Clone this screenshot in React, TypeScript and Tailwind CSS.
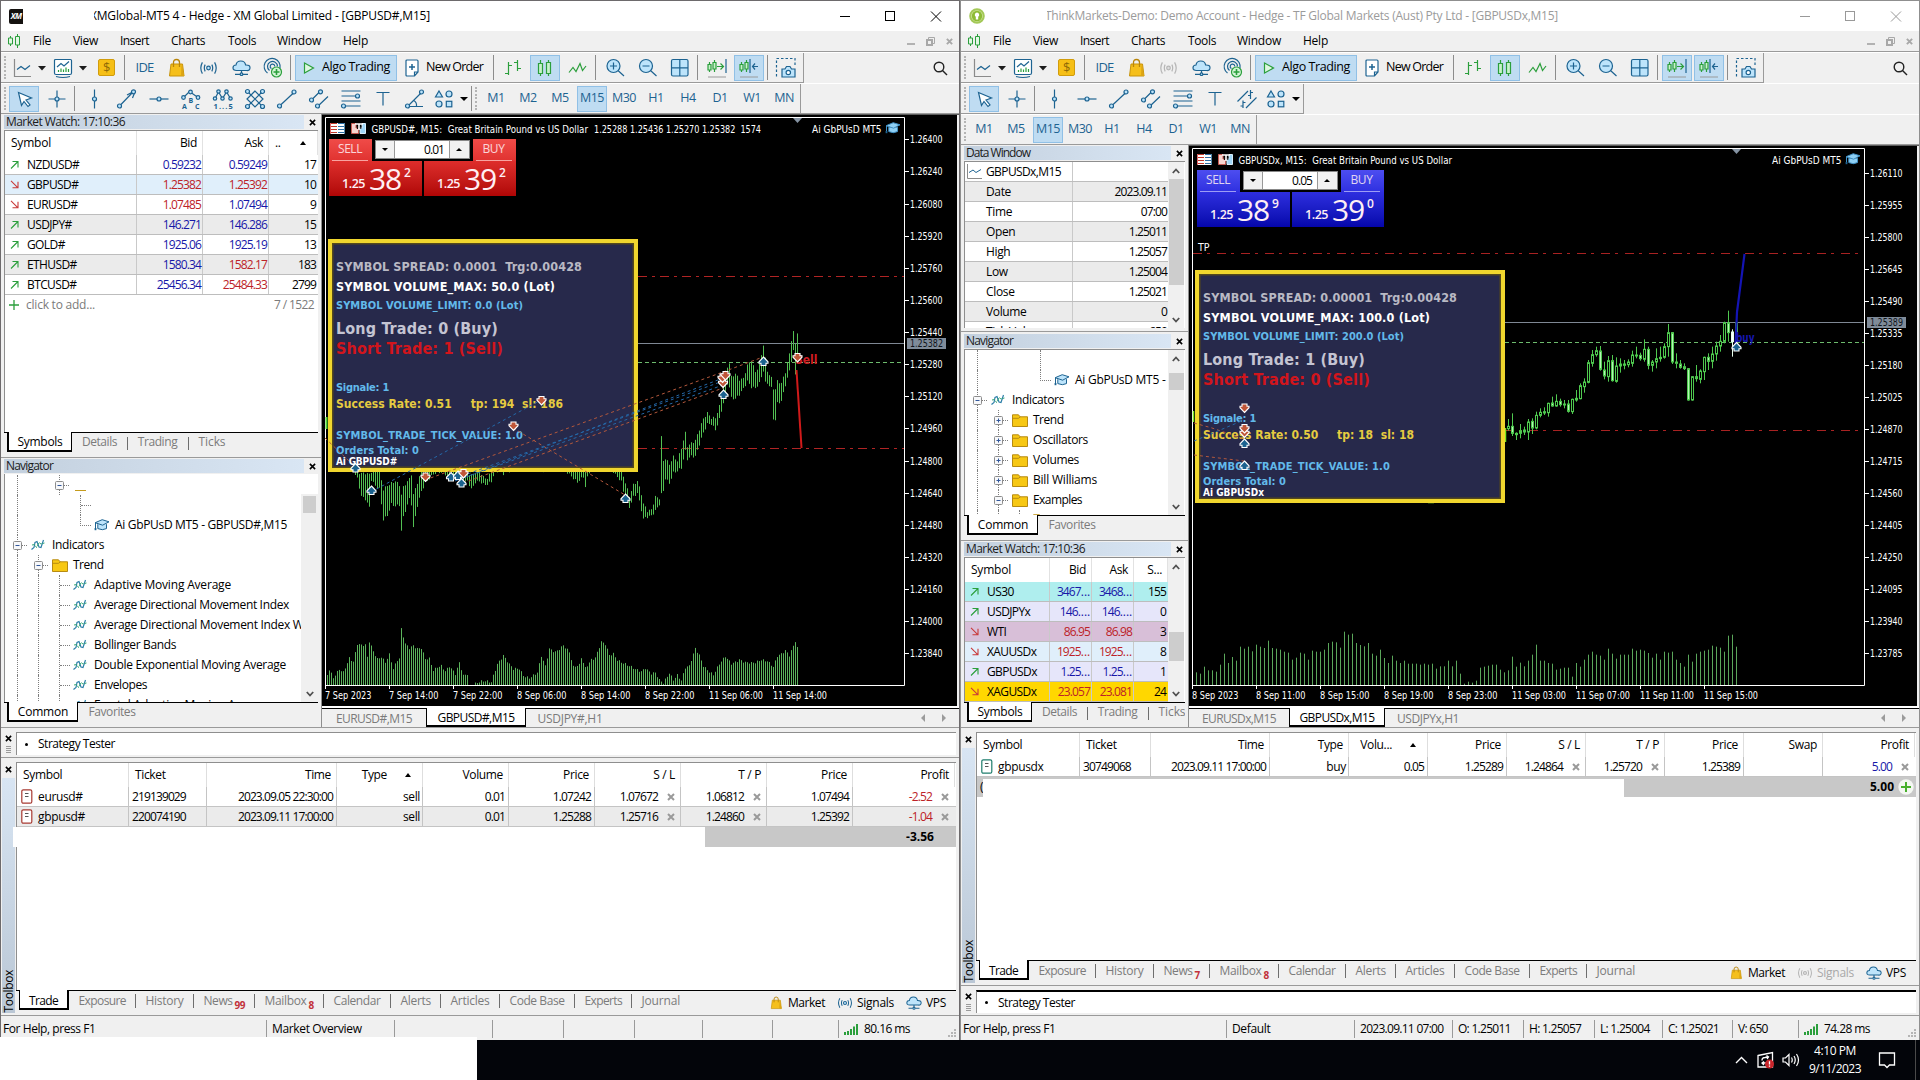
import { useLayoutEffect, useRef, type ReactNode } from "react";

/* ---------- text helpers ---------- */

// Spreads its letters so that the line takes exactly `w` pixels.
function Fit({ w, className = "", children }: { w: number; className?: string; children: string }) {
  const ref = useRef<HTMLSpanElement>(null);
  useLayoutEffect(() => {
    const el = ref.current;
    if (!el) return;
    el.style.letterSpacing = "0px";
    const natural = el.getBoundingClientRect().width;
    el.style.letterSpacing = `${(w - natural) / children.length}px`;
  }, [w, children]);
  return (
    <span className={`inline-block whitespace-pre ${className}`}>
      <span ref={ref}>{children}</span>
    </span>
  );
}

const NUM = "tracking-[-0.88px] pr-px";
const BLUE = "text-[#1717a8]";
const RED = "text-[#bc2228]";

/* ---------- small shared drawings ---------- */

const B = "#1d6391";
const G = "#2b9f3c";
const L = "#bde4fb";

function Cell({ w, on = false, children }: { w: string; on?: boolean; children?: ReactNode }) {
  return (
    <div className={`${w} flex h-[26px] shrink-0 items-center justify-center ${on ? "border border-[#90c0e6] bg-[#bfdcf2]" : ""}`}>
      {children}
    </div>
  );
}

function Sep() {
  return <div className="h-[25px] w-px shrink-0 bg-[#8c8c8c]" />;
}

function Grip({ w }: { w: string }) {
  return (
    <div className={`${w} flex h-[26px] shrink-0 flex-col items-center justify-between py-px`}>
      {[0, 1, 2, 3, 4, 5, 6].map((i) => (
        <div key={i} className="h-[2px] w-[2px] bg-[#b4b4b4]" />
      ))}
    </div>
  );
}

function Cross({ size = "h-[7px] w-[7px]", color = "#000", width = 1.8 }: { size?: string; color?: string; width?: number }) {
  return (
    <svg className={`${size} shrink-0`} viewBox="0 0 8 8" fill="none" stroke={color} strokeWidth={width}>
      <path d="M1 1L7 7M7 1L1 7" />
    </svg>
  );
}

function Bag({ size = "h-[20px] w-[18px]" }: { size?: string }) {
  return (
    <svg className={size} viewBox="0 0 18 20" fill="none">
      <path d="M3 6H14.5L16 18H1.5Z" fill="#f5bf1b" stroke="#c8930a" />
      <path d="M13.5 6L16.3 18H13Z" fill="#dca514" />
      <path d="M5.5 9V4.5Q5.5 1.5 8.5 1.5T11.5 4.5V9" stroke="#b98509" strokeWidth="1.3" />
    </svg>
  );
}

function Signal({ off = false, size = "h-[14px] w-[19px]" }: { off?: boolean; size?: string }) {
  const c = off ? "#b5b5b5" : B;
  return (
    <svg className={size} viewBox="0 0 19 14" fill="none" stroke={c} strokeWidth="1.2">
      <circle cx="9.5" cy="7" r="1.8" fill={off ? "#ddd" : L} />
      <path d="M6.2 3.6Q4.4 7 6.2 10.4M12.8 3.6Q14.6 7 12.8 10.4M3.4 1.4Q0.2 7 3.4 12.6M15.6 1.4Q18.8 7 15.6 12.6" />
    </svg>
  );
}

function Cloud({ size = "h-[16px] w-[19px]" }: { size?: string }) {
  return (
    <svg className={size} viewBox="0 0 19 16" fill="none" stroke={B} strokeWidth="1.2">
      <path d="M4.5 10.5Q1 10.5 1 7.8T4 5Q4.6 1 8.8 1T13.6 5Q18 4.8 18 7.8T14.6 10.5Z" fill={L} />
      <path d="M9.5 10.5V13M3 14.3H8M11 14.3H16" />
      <circle cx="9.5" cy="14.2" r="1.3" fill={L} />
    </svg>
  );
}

function Cap({ light = false }: { light?: boolean }) {
  return (
    <svg className="h-[12px] w-[16px] shrink-0" viewBox="0 0 16 12" fill="none" stroke={light ? "#3f8fc4" : B}>
      <path d="M3.8 5.2V9.6Q8.5 11.8 12.5 9.6V5.2" fill={light ? "#8fd0f5" : L} />
      <path d="M1.2 3.7L8.2 .7L15 2.8L8.6 6.2Z" fill={light ? "#8fd0f5" : L} />
      <path d="M1.5 4V10" />
      <rect x=".6" y="9" width="1.8" height="2.2" fill={B} stroke="none" />
    </svg>
  );
}

function Wave() {
  return (
    <svg className="h-[12px] w-[14px] shrink-0" viewBox="0 0 14 12" fill="none">
      <path d="M.5 10.5L3 8.5L4 3.5L6 2.5L8 8L10 8.5L12.5 1" stroke="#2c7fa8" strokeWidth="1.2" />
      <path d="M1 6L3.5 5.5L5.5 8.5L8 3.5L10 5L13.5 4" stroke="#39a878" strokeWidth="1" strokeDasharray="3 1" />
    </svg>
  );
}

function Folder() {
  return (
    <svg className="h-[13px] w-[16px] shrink-0" viewBox="0 0 16 13">
      <path d="M.5 12.5V.8H6.5L8 2.8H15.5V12.5Z" fill="#f7c814" stroke="#b78b12" />
      <path d="M.5 4.3H6.5L8.3 2.8" fill="none" stroke="#b78b12" />
    </svg>
  );
}

function Search() {
  return (
    <svg className="h-[15px] w-[15px]" viewBox="0 0 15 15" fill="none" stroke="#222" strokeWidth="1.4">
      <circle cx="6" cy="6" r="4.8" />
      <path d="M9.5 9.5L14 14" />
    </svg>
  );
}

function Up() {
  return <div className="h-0 w-0 border-x-[3.5px] border-b-[4px] border-x-transparent border-b-black" />;
}

/* ---------- toolbars ---------- */

function Tool({ children, w = 22 }: { children: ReactNode; w?: number }) {
  return (
    <svg width={w} height="22" viewBox={`0 0 ${w} 22`} fill="none" stroke={B} strokeWidth="1.2" className="shrink-0">
      {children}
    </svg>
  );
}

function Dot({ x, y, r = 2 }: { x: number; y: number; r?: number }) {
  return <circle cx={x} cy={y} r={r} fill={L} />;
}

function MainToolbar({ signalsOff, shiftOn }: { signalsOff: boolean; shiftOn: boolean }) {
  return (
    <div className="flex h-[31px] shrink-0 border-t border-white">
      <div className="flex h-[30px] w-[803px] items-center border-r border-b border-[#9a9a9a]">
        <Grip w="w-[8px]" />
        <Cell w="w-[40px]">
          <Tool w={36}>
            <path d="M3.5 2V19.500H20" stroke="#8a8a8a" />
            <path d="M6 12.500L10 9.500L14 12.500L19 8.500" />
            <path d="M27 9H35L31 13.500Z" fill="#1c1c1c" stroke="none" />
          </Tool>
        </Cell>
        <Cell w="w-[40px]">
          <Tool w={36}>
            <path d="M4.500 2.500H19.500Q20.500 2.500 20.500 3.500V16Q20.500 17.500 19 17.500H5Q3.500 17.500 3.500 16V3.500Q3.500 2.500 4.500 2.500Z" fill="#fff" />
            <path d="M5 19.500Q12 21.500 19 19.500" />
            <path d="M6 10L10 6.500L13 9L18 4.500" />
            <path d="M7.500 15V13M10 15V11.500M12.500 15V12.500M15 15V10.500M17.500 15V12" stroke={G} />
            <path d="M28 9H36L32 13.500Z" fill="#1c1c1c" stroke="none" />
          </Tool>
        </Cell>
        <Cell w="w-[35px]">
          <div className="flex h-[17px] w-[17px] items-center justify-center rounded-[2px] border border-[#d19c0c] bg-[#f6bf16] text-[13px] leading-none text-[#8f6a07]">$</div>
        </Cell>
        <Sep />
        <Cell w="w-[39px]">
          <span className="text-[13px] tracking-[-0.8px] text-[#1d6391]">IDE</span>
        </Cell>
        <Cell w="w-[26px]"><Bag /></Cell>
        <Cell w="w-[36px]"><Signal off={signalsOff} /></Cell>
        <Cell w="w-[30px]"><Cloud /></Cell>
        <Cell w="w-[34px]">
          <Tool>
            <path d="M5.500 16A8 8 0 1 1 18 11M7.500 13.500A5 5 0 1 1 15.500 9.500M9.500 11.500A2.300 2.300 0 1 1 12.800 9.500" />
            <circle cx="14.500" cy="15" r="5" fill="#d4f5d6" stroke={G} />
            <path d="M14.500 12V18M11.500 15H17.500" stroke={G} strokeWidth="1.600" />
          </Tool>
        </Cell>
        <Sep />
        <div className="ml-1 flex h-[26px] w-[102px] items-center border border-[#90c0e6] bg-[#bfdcf2] pl-[7px]">
          <svg className="h-[12px] w-[12px]" viewBox="0 0 12 12"><path d="M1.500 1L10.500 6L1.500 11Z" fill="#dff7e0" stroke={G} strokeWidth="1.200" /></svg>
          <Fit w={68} className="ml-[7px] text-[12.5px]">Algo Trading</Fit>
        </div>
        <div className="flex w-[96px] items-center pl-[8px]">
          <svg className="h-[18px] w-[14px]" viewBox="0 0 14 18" fill="none" stroke={B} strokeWidth="1.200">
            <path d="M2 1H12Q13 1 13 2V13L9.500 17H2Q1 17 1 16V2Q1 1 2 1ZM9.500 17V13H13" fill="#fff" />
            <path d="M7 5V11M4 8H10" strokeWidth="1.500" />
          </svg>
          <Fit w={57} className="ml-[7px] text-[12.5px]">New Order</Fit>
        </div>
        <Sep />
        <Cell w="w-[36px]">
          <Tool><path d="M7.500 5V18M4 16.500H7.500M7.500 8.500H11M16.500 3V14M13 5.500H16.500M16.500 11.500H20" stroke={G} /></Tool>
        </Cell>
        <Cell w="w-[30px]" on>
          <Tool>
            <path d="M6.500 3V19M14.500 3V19" stroke={G} />
            <path d="M4.500 6.500H8.500V16.500H4.500ZM12.500 5.500H16.500V16.500H12.500Z" fill="#c9f2cb" stroke={G} />
          </Tool>
        </Cell>
        <Cell w="w-[35px]">
          <Tool><path d="M2 15.500L6 10.500L9 14.500L13 6.500L15.500 13.500L19 9" stroke={G} /></Tool>
        </Cell>
        <Sep />
        <Cell w="w-[38px]">
          <Tool><circle cx="9.500" cy="9" r="6.500" fill={L} /><path d="M9.500 5.500V12.500M6 9H13M14 13.500L20 19" /></Tool>
        </Cell>
        <Cell w="w-[28px]">
          <Tool><circle cx="9" cy="9" r="6.500" fill={L} /><path d="M5.500 9H12.500M13.500 13.500L19.500 19" /></Tool>
        </Cell>
        <Cell w="w-[35px]">
          <Tool><rect x="2.500" y="2.500" width="16.500" height="16.500" rx="1.500" fill={L} /><path d="M10.800 2.500V19M2.500 10.800H19" /></Tool>
        </Cell>
        <Sep />
        <div className="ml-1 mr-[2px]">
          <Cell w="w-[30px]" on={shiftOn}>
            <Tool>
              <path d="M3.500 5V15M8.500 3V15" stroke={G} /><path d="M2 7.500H5V13H2ZM7 5.500H10V12H7Z" fill="#c9f2cb" stroke={G} />
              <path d="M11 9.500H17M14.500 6.500L17.500 9.500L14.500 12.500" stroke={G} />
              <path d="M20 2V16" /><path d="M2 20H20" stroke="#9a9a9a" strokeWidth="1" />
            </Tool>
          </Cell>
        </div>
        <Cell w="w-[30px]" on>
          <Tool>
            <path d="M3.500 5V15M8.500 3V15" stroke={G} /><path d="M2 7.500H5V13H2ZM7 5.500H10V12H7Z" fill="#c9f2cb" stroke={G} />
            <path d="M12 2V16M20 9.500H14.500M17 6.500L14.500 9.500L17 12.500" /><path d="M2 20H20" stroke="#9a9a9a" strokeWidth="1" />
          </Tool>
        </Cell>
        <div className="w-[3px]" />
        <Sep />
        <Cell w="w-[35px]">
          <Tool>
            <path d="M1.500 19.500V1.500H20V8" strokeDasharray="2.500 2" />
            <path d="M7 20V12H10L11.500 9.500H15L16.500 12H20V20Z" fill={L} />
            <circle cx="13.300" cy="15.500" r="2.200" fill="#fff" />
          </Tool>
        </Cell>
      </div>
      <div className="flex flex-1 items-center justify-end pr-[11px]"><Search /></div>
    </div>
  );
}

const glyphs: Record<string, ReactNode> = {
  vline: <><path d="M10.500 1.500V20.500" /><Dot x={10.500} y={11} /></>,
  hline: <><path d="M1.500 11H20.500" /><Dot x={11} y={11} /></>,
  arrow: <><path d="M4 17.500L17 4M11 7L17.500 3.500M16.500 10L18.500 5" /><Dot x={3.500} y={18} /><Dot x={17.500} y={3.800} /></>,
  abc: <><path d="M3.500 9.500L9.500 3.500L18 9.500" /><Dot x={3.500} y={9.500} r={1.800} /><Dot x={10.500} y={4} r={1.800} /><Dot x={18} y={9.500} r={1.800} />
    <text x="2" y="20.500" fontSize="7" fontWeight="700" fill={B} stroke="none">A</text><text x="8.500" y="14.500" fontSize="7" fontWeight="700" fill={B} stroke="none">B</text><text x="15" y="20.500" fontSize="7" fontWeight="700" fill={B} stroke="none">C</text></>,
  waves: <><path d="M3 10.500L6.500 4L10.500 10.500L14.500 4L18.500 10.500" /><Dot x={3} y={10.500} r={1.700} /><Dot x={6.500} y={3.500} r={1.700} /><Dot x={10.500} y={10.500} r={1.700} /><Dot x={14.500} y={3.500} r={1.700} /><Dot x={18.500} y={10.500} r={1.700} />
    <text x="1.500" y="20.500" fontSize="7.500" fontWeight="700" fill={B} stroke="none" textLength="19">1...5</text></>,
  gann: <><path d="M3.500 3.500L18.500 18.500M18.500 3.500L3.500 18.500M11 3L3 11L11 19L19 11Z" /><Dot x={3.500} y={3.500} /><Dot x={18.500} y={3.500} /><Dot x={3.500} y={18.500} /><Dot x={18.500} y={18.500} /></>,
  trend: <><path d="M3.500 18L18.500 4" /><Dot x={3.500} y={18} /><Dot x={18} y={4} /></>,
  channel: <><path d="M3.500 12L12 3.500M9.500 18.500L20 8.500" /><Dot x={3.500} y={12} /><Dot x={12.500} y={3.800} /><Dot x={9.500} y={18} /></>,
  fibo: <><path d="M1.500 3H20.500M1.500 8H16M1.500 13H20.500M5 18H20.500" /><Dot x={17.500} y={8} /><Dot x={3.500} y={18} /></>,
  text: <path d="M4.500 4.500H17.500M11 4.500V17.500" />,
  angle: <><path d="M3.500 18.500H19M3.500 18.500L17.500 4.500M9.500 12.500Q13 14 12.500 18.500" /><Dot x={3.500} y={18} /><Dot x={17.500} y={4} /></>,
  shapes: <><path d="M5 3L8.500 9H1.500Z" fill={L} /><circle cx="15" cy="6" r="3" fill={L} /><circle cx="5" cy="16" r="3" fill={L} /><rect x="12.300" y="13.300" width="5.500" height="5.500" fill={L} /></>,
  fork: <><path d="M1.500 13.500L12 3M10 20L20.500 9.500M7 12.500V20M4.500 18H7M7 14.500H9.500M14.500 2V11M12 7.500H14.500M14.500 4.500H17" /></>,
};

function ToolRow({ tools }: { tools: string[] }) {
  return (
    <>
      <Grip w="w-[8px]" />
      <Cell w="w-[30px]" on>
        <Tool><path d="M5.500 4.500L18.500 10L13 12L17 17L15 18.500L11 13.500L8.500 17.500Z" fill="#fff" /></Tool>
      </Cell>
      <Cell w="w-[35px]">
        <Tool><path d="M11 2.500V19.500M2.500 11H19.500" /><Dot x={11} y={11} /></Tool>
      </Cell>
      <Sep />
      <div className="w-1 shrink-0" />
      {tools.map((t) => (
        <Cell key={t} w="w-8"><Tool>{glyphs[t]}</Tool></Cell>
      ))}
      <div className="flex w-[40px] shrink-0 items-center gap-[4px] pl-[3px]">
        <Tool>{glyphs.shapes}</Tool>
        <div className="h-0 w-0 border-x-[4px] border-t-[4.5px] border-x-transparent border-t-black" />
      </div>
    </>
  );
}

function Frames({ items }: { items: string[] }) {
  return (
    <>
      {items.map((t) => (
        <Cell key={t} w="w-8">
          <div className={`flex h-[26px] w-[30px] items-center justify-center text-[12.5px] tracking-[-0.5px] text-[#1d6391] ${t === "M15" ? "border border-[#90c0e6] bg-[#bfdcf2]" : ""}`}>{t}</div>
        </Cell>
      ))}
    </>
  );
}

/* ---------- window frame ---------- */

const MENU: [string, string, number][] = [
  ["File", "w-[40px]", 18], ["View", "w-[47px]", 25], ["Insert", "w-[51px]", 29], ["Charts", "w-[57px]", 34],
  ["Tools", "w-[49px]", 28], ["Window", "w-[66px]", 44], ["Help", "w-[40px]", 25],
];

function TitleBar({ logo, title, active }: { logo: ReactNode; title: ReactNode; active: boolean }) {
  const c = active ? "#000" : "#999";
  return (
    <div className={`flex h-[30px] shrink-0 items-center bg-white pl-[8px] ${active ? "text-black" : "text-[#9b9b9b]"}`}>
      {logo}
      {title}
      <svg className="mr-[17px] ml-auto h-[12px] w-[104px]" viewBox="0 0 104 12" fill="none" stroke={c} strokeWidth="1">
        <path d="M2 6.500H12M93 1.500L103 11.500M103 1.500L93 11.500" />
        <rect x="47.500" y="1.500" width="9" height="9" />
      </svg>
    </div>
  );
}

function MenuBar() {
  return (
    <div className="flex h-[20px] shrink-0 items-center pl-[6px]">
      <svg className="mr-[12px] h-[14px] w-[14px]" viewBox="0 0 14 14" fill="#e3f7e5" stroke={G}>
        <path d="M3.500 2V12M10.500 0V14" /><path d="M1.500 4H5.500V10H1.500ZM8.500 2.500H12.500V11H8.500Z" />
      </svg>
      {MENU.map(([m, w, fw]) => (
        <div key={m} className={w}><Fit w={fw}>{m}</Fit></div>
      ))}
      <div className="mr-[6px] ml-auto flex items-center gap-[11px]">
        <div className="mt-[5px] h-[2px] w-[8px] bg-[#b2b2b2]" />
        <svg className="h-[9px] w-[9px]" viewBox="0 0 9 9" fill="none" stroke="#a8a8a8"><path d="M2.500 2V.5H8.500V6.500H7" /><rect x="1" y="3" width="5" height="5" strokeWidth="2" /></svg>
        <Cross color="#a8a8a8" width={2.2} />
      </div>
    </div>
  );
}

/* ---------- docked panels ---------- */

function DockHead({ title, w, bar }: { title: string; w: number; bar: string }) {
  return (
    <div className="flex h-[16px] shrink-0 items-center">
      <div className={`${bar} flex h-[14px] items-center bg-linear-to-r from-[#c3d0de] to-[#d9e6f4] pl-[2px] text-[#1b1b1b]`}>
        <Fit w={w}>{title}</Fit>
      </div>
      <div className="flex flex-1 items-center justify-center pt-px"><Cross /></div>
    </div>
  );
}

function DockTabs({ tabs }: { tabs: [string, string, number][] }) {
  return (
    <div className="flex h-[25px] shrink-0 items-start overflow-hidden">
      <div className="h-px w-[3px] shrink-0 bg-black" />
      {tabs.map(([t, w, fw], i) => (
        <div
          key={t}
          className={`${w} flex shrink-0 items-center justify-center ${i === 0 ? "h-[20px] border-x border-b border-black border-l-[2px] border-b-[2px] bg-white pt-[2px]" : "h-[18px] border-t border-t-black text-[#7b7b7b]"} ${i > 1 ? "relative before:absolute before:top-[4px] before:left-0 before:h-[13px] before:w-px before:bg-[#6e6e6e]" : ""}`}
        >
          <Fit w={fw}>{t}</Fit>
        </div>
      ))}
      <div className="h-px flex-1 bg-black" />
    </div>
  );
}

function Scroll({ h, top, thumb }: { h: string; top: string; thumb: string }) {
  return (
    <div className={`${h} flex w-[16px] shrink-0 flex-col items-center bg-[#f0f0f0]`}>
      <svg className="mt-[6px] h-[6px] w-[8px] shrink-0" viewBox="0 0 8 6" fill="none" stroke="#505050" strokeWidth="1.800"><path d="M.8 5L4 1.500L7.200 5" /></svg>
      <div className={top} />
      <div className={`${thumb} w-[15px] shrink-0 bg-[#cdcdcd]`} />
      <svg className="mt-auto mb-[5px] h-[6px] w-[8px] shrink-0" viewBox="0 0 8 6" fill="none" stroke="#505050" strokeWidth="1.800"><path d="M.8 1L4 4.500L7.200 1" /></svg>
    </div>
  );
}

type Quote = { s: string; up: boolean; bid: string; ask: string; sp: string; bb: boolean; ab: boolean; bg: string };

function Price({ v }: { v: string }) {
  const cut = v.indexOf("..");
  if (cut < 0) return <>{v}</>;
  return (
    <>
      {v.slice(0, cut)}
      <span className="tracking-[-0.1px]">{v.slice(cut)}</span>
    </>
  );
}

function QuoteRow({ q, cols }: { q: Quote; cols: string[] }) {
  return (
    <div className={`flex h-[20px] shrink-0 items-center border-b border-[#bdbdbd] ${q.bg}`}>
      <div className={`${cols[0]} flex h-full items-center border-r border-[#c9c9c9] pl-[5px]`}>
        <svg className="mr-[8px] h-[9px] w-[9px]" viewBox="0 0 9 9" fill="none" stroke={q.up ? G : "#c83a3a"} strokeWidth="1.100">
          {q.up ? <path d="M1 8.500L8 1.500M2.500 1.500H8V7.500" /> : <path d="M1 .8L8 7.800M2.500 7.800H8V1.800" />}
        </svg>
        <span className="tracking-[-0.6px]">{q.s}</span>
      </div>
      <div className={`${cols[1]} flex h-full items-center justify-end border-r border-[#c9c9c9] pr-[3px] ${NUM} ${q.bb ? BLUE : RED}`}><Price v={q.bid} /></div>
      <div className={`${cols[2]} flex h-full items-center justify-end border-r border-[#c9c9c9] pr-[3px] ${NUM} ${q.ab ? BLUE : RED}`}><Price v={q.ask} /></div>
      <div className={`${cols[3]} flex h-full items-center justify-end pr-[4px] ${NUM}`}>{q.sp}</div>
    </div>
  );
}

const leftQuotes: Quote[] = [
  { s: "NZDUSD#", up: true, bid: "0.59232", ask: "0.59249", sp: "17", bb: true, ab: true, bg: "bg-white" },
  { s: "GBPUSD#", up: false, bid: "1.25382", ask: "1.25392", sp: "10", bb: false, ab: false, bg: "bg-[#e0effb]" },
  { s: "EURUSD#", up: false, bid: "1.07485", ask: "1.07494", sp: "9", bb: false, ab: true, bg: "bg-white" },
  { s: "USDJPY#", up: true, bid: "146.271", ask: "146.286", sp: "15", bb: true, ab: true, bg: "bg-[#ebebeb]" },
  { s: "GOLD#", up: true, bid: "1925.06", ask: "1925.19", sp: "13", bb: true, ab: true, bg: "bg-white" },
  { s: "ETHUSD#", up: true, bid: "1580.34", ask: "1582.17", sp: "183", bb: true, ab: false, bg: "bg-[#ebebeb]" },
  { s: "BTCUSD#", up: true, bid: "25456.34", ask: "25484.33", sp: "2799", bb: true, ab: false, bg: "bg-white" },
];

const rightQuotes: Quote[] = [
  { s: "US30", up: true, bid: "3467...", ask: "3468...", sp: "155", bb: true, ab: true, bg: "bg-[#afeeee]" },
  { s: "USDJPYx", up: true, bid: "146....", ask: "146....", sp: "0", bb: true, ab: true, bg: "bg-[#e6e6fa]" },
  { s: "WTI", up: false, bid: "86.95", ask: "86.98", sp: "3", bb: false, ab: false, bg: "bg-[#d8bfd8]" },
  { s: "XAUUSDx", up: false, bid: "1925...", ask: "1925...", sp: "8", bb: false, ab: false, bg: "bg-[#e0effb]" },
  { s: "GBPUSDx", up: true, bid: "1.25...", ask: "1.25...", sp: "1", bb: true, ab: true, bg: "bg-[#e6e6fa]" },
  { s: "XAGUSDx", up: false, bid: "23.057", ask: "23.081", sp: "24", bb: false, ab: false, bg: "bg-[#ffd700]" },
];

/* ---------- navigator tree ---------- */

// Guides: "|" line, " " gap, "-" open box, "+" closed box, "t" branch, "l" last branch.
function Guide({ k }: { k: string }) {
  const d = "border-dotted border-[#7d7d7d]";
  return (
    <div className="flex h-[20px] w-[21px] shrink-0">
      <div className={`w-[10px] ${k === "-" || k === "+" ? "flex items-center justify-end" : ""}`} />
      {k === "|" && <div className={`w-0 border-l ${d}`} />}
      {k === "t" && <div className={`flex w-[11px] items-center border-l ${d}`}><div className={`w-full border-t ${d}`} /></div>}
      {k === "l" && <div className={`h-[11px] w-[11px] border-b border-l ${d}`} />}
      {(k === "-" || k === "+") && (
        <div className="-ml-[4px] flex items-center">
          <svg className="h-[20px] w-[15px]" viewBox="0 0 15 20" fill="none">
            <path d="M4.500 0V5M4.500 15V20M9 10.500H15" stroke="#7d7d7d" strokeDasharray="1 1" />
            <rect x=".5" y="6.500" width="8" height="8" rx="1" fill="#f7f8fa" stroke="#8c8c8c" />
            <path d={k === "+" ? "M2.500 10.500H6.500M4.500 8.500V12.500" : "M2.500 10.500H6.500"} stroke="#31579b" />
          </svg>
        </div>
      )}
    </div>
  );
}

function Node({ g, icon, text, w }: { g: string; icon?: ReactNode; text?: string; w?: number }) {
  return (
    <div className="flex h-[20px] shrink-0 items-center pl-[2px]">
      {g.split("").map((k, i) => <Guide key={i} k={k} />)}
      <div className="flex w-[24px] shrink-0 items-center pl-[3px]">{icon}</div>
      {text && (w ? <Fit w={w}>{text}</Fit> : <span className="whitespace-nowrap">{text}</span>)}
    </div>
  );
}

/* ---------- charts ---------- */

function Tx({ x, y, w, fill = "#fff", size = 10, bold = false, children }: { x: number; y: number; w: number; fill?: string; size?: number; bold?: boolean; children: string }) {
  return (
    <text x={x} y={y} textLength={w} lengthAdjust="spacingAndGlyphs" fill={fill} fontSize={size} fontWeight={bold ? 700 : 400} xmlSpace="preserve">
      {children}
    </text>
  );
}

function Mark({ x, y, up }: { x: number; y: number; up: boolean }) {
  return (
    <path
      d={up ? "M0 -4.500L4.500 0.300V1.800H2.500V4H-2.500V1.800H-4.500V0.300Z" : "M0 4.500L4.500 -0.300V-1.800H2.500V-4H-2.500V-1.800H-4.500V-0.300Z"}
      transform={`translate(${x} ${y})`}
      fill={up ? "#1b628f" : "#bf5638"}
      stroke="#fff"
      strokeWidth="1.100"
    />
  );
}

function Flags({ x, y }: { x: number; y: number }) {
  return (
    <g transform={`translate(${x} ${y})`}>
      <rect width="15" height="11" fill="#fff" />
      <path d="M0 .5H7M0 3.500H7M0 6.500H7M0 9.500H7" stroke="#c0392b" strokeWidth="1.200" />
      <path d="M8 .5H15M8 3.500H15M8 6.500H15M8 9.500H15" stroke="#2c6fa5" strokeWidth="1.200" />
      <path d="M.5 0V11" stroke="#d66" /><path d="M14.500 0V11" stroke="#58a" />
      <path d="M21.500 .5H26V5H28.500V10.500H21.500Z" fill="#f6d5d0" stroke="#c65a52" />
      <path d="M35.500 .5H32V5H30V10.500H35.500Z" fill="#9fd6f7" stroke="#d9eefb" />
      <path d="M25 1H33M29 1V7" stroke="#fff" strokeWidth="1.600" />
      <path d="M27.500 3V6M30.800 3V6" stroke="#101010" />
    </g>
  );
}

function lerpTable(points: number[][], x: number, k: number) {
  for (let i = 1; i < points.length; i++) {
    const a = points[i - 1];
    const b = points[i];
    if (x <= b[0]) return a[k] + ((b[k] - a[k]) * (x - a[0])) / (b[0] - a[0] || 1);
  }
  return points[points.length - 1][k];
}

const leftVol = [
  [327, 10], [329, 15], [333, 6], [339, 15], [343, 13], [349, 28], [353, 24], [357, 41], [361, 39], [365, 39], [367, 27], [369, 43], [373, 34], [377, 27], [381, 29], [385, 23], [389, 30], [393, 15], [397, 24], [399, 26], [401, 56], [405, 42], [409, 38], [413, 40], [417, 36], [421, 36], [425, 25], [429, 26], [433, 15], [437, 19], [441, 20], [445, 14], [449, 18], [455, 10], [459, 22], [463, 10], [467, 12], [469, 0], [477, 2], [483, 3], [491, 3], [493, 10], [497, 22], [503, 30], [509, 20], [513, 15], [519, 16], [523, 10], [529, 8], [537, 12], [541, 28], [545, 18], [549, 36], [555, 34], [563, 40], [569, 32], [573, 17], [579, 20], [581, 28], [585, 18], [591, 26], [595, 27], [601, 42], [605, 40], [609, 30], [613, 32], [617, 26], [623, 22], [629, 18], [635, 15], [641, 14], [645, 18], [651, 12], [655, 12], [659, 4], [663, 1], [669, 12], [673, 6], [677, 11], [681, 5], [685, 17], [689, 18], [695, 36], [699, 30], [703, 20], [709, 14], [713, 10], [719, 20], [725, 28], [731, 22], [739, 26], [745, 22], [751, 21], [755, 22], [761, 26], [767, 25], [773, 18], [777, 28], [781, 30], [785, 34], [789, 30], [793, 40], [795, 45], [797, 38],
];

const leftBars = [
  [355, 472, 475], [357, 472, 478], [361, 472, 495], [365, 472, 498], [369, 474, 507], [371, 472, 480], [375, 472, 487], [379, 472, 490], [383, 490, 520], [387, 485, 515], [391, 482, 503], [395, 480, 505], [399, 485, 505], [401, 495, 531], [403, 488, 518], [409, 480, 500], [411, 475, 505], [413, 495, 528], [417, 482, 505], [421, 470, 490], [425, 470, 482], [433, 470, 475], [441, 470, 473], [457, 470, 478], [463, 475, 485], [467, 475, 482], [471, 476, 490], [475, 472, 482], [479, 470, 480], [483, 476, 483], [487, 478, 484], [491, 472, 482], [495, 468, 472], [503, 468, 474], [507, 466, 470], [565, 466, 470], [571, 470, 475], [577, 470, 482], [583, 470, 478], [585, 470, 488], [588, 468, 474], [595, 460, 468], [611, 466, 470], [615, 468, 476], [621, 470, 482], [625, 482, 500], [629, 495, 506], [633, 484, 496], [637, 481, 493], [641, 495, 511], [643, 505, 520], [647, 512, 518], [651, 510, 516], [655, 496, 510], [659, 497, 503], [661, 436, 493], [663, 460, 490], [665, 458, 478], [669, 465, 484], [673, 458, 474], [677, 462, 472], [681, 448, 468], [685, 432, 450], [687, 445, 458], [691, 442, 455], [695, 440, 456], [699, 430, 445], [703, 420, 434], [707, 414, 425], [711, 418, 424], [715, 417, 429], [719, 405, 418], [723, 378, 402], [727, 367, 384], [729, 364, 388], [731, 378, 399], [735, 375, 400], [739, 380, 395], [743, 378, 388], [747, 364, 380], [751, 359, 386], [755, 372, 388], [759, 366, 384], [763, 346, 372], [765, 360, 384], [767, 372, 384], [771, 378, 388], [773, 388, 418], [775, 388, 419], [777, 380, 402], [781, 382, 400], [785, 372, 385], [789, 355, 372], [791, 341, 362], [793, 333, 352], [795, 345, 376], [797, 333, 362],
];

const jitter = (i: number) => Math.sin(i * 12.9898) * 0.5 + Math.sin(i * 4.1) * 0.5;

function Axis({ first, step, y0, dy, n, x }: { first: number; step: number; y0: number; dy: number; n: number; x: number }) {
  return (
    <>
      {Array.from({ length: n }, (_, i) => (
        <g key={i}>
          <path d={`M${x} ${Math.round(y0 + i * dy) + 0.5}h4`} stroke="#fff" />
          <Tx x={x + 5} y={y0 + i * dy + 4} w={32.500}>{((first - step * i) / 100000).toFixed(5)}</Tx>
        </g>
      ))}
    </>
  );
}

function LeftChart() {
  const times = ["7 Sep 2023", "7 Sep 14:00", "7 Sep 22:00", "8 Sep 06:00", "8 Sep 14:00", "8 Sep 22:00", "11 Sep 06:00", "11 Sep 14:00"];
  const bars = Array.from({ length: 236 }, (_, i) => 327 + i * 2);
  return (
    <svg className="block h-[591px] w-[635px] font-['DejaVu_Sans_Condensed','DejaVu_Sans',sans-serif] tracking-normal" viewBox="322 115 635 591">
      <rect x="322" y="115" width="635" height="591" fill="#000" />
      <path d="M325.500 686V117.500H904.500V685.500H325.500" fill="none" stroke="#fff" />
      <path d="M793 118H802L797.500 123Z" fill="#8593a3" />
      <Flags x={330} y={123} />
      <Tx x={371.500} y={132.500} w={216.500}>GBPUSD#, M15:  Great Britain Pound vs US Dollar</Tx>
      <Tx x={594} y={132.500} w={167}>{"1.25288 1.25436 1.25270 1.25382\u00a0\u00a01574"}</Tx>
      <Tx x={812} y={132.500} w={69.500}>Ai GbPUsD MT5</Tx>
      <Axis first={126400} step={160} y0={139.300} dy={32.120} n={17} x={905} />
      {bars.map((x, i) => {
        const h = Math.max(0, lerpTable(leftVol, x, 1) + jitter(i) * 2.200);
        return <path key={x} d={`M${x + 0.5} 685V${685 - h}`} stroke="#5bb35b" />;
      })}
      {times.map((t, i) => (
        <g key={t}>
          <path d={`M${325.500 + i * 64} 685V689`} stroke="#fff" />
          <Tx x={325 + i * 64} y={698.500} w={t.length === 10 ? 46.500 : t.length === 11 ? 49.500 : 54}>{t}</Tx>
        </g>
      ))}
      <path d="M326.500 417V429" stroke="#4fd42f" strokeWidth="2" />
      <path d="M638 343.500H904" stroke="#7f8894" />
      <path d="M638 362.500H904" stroke="#6dbb6d" strokeDasharray="4 3" />
      <path d="M638 276.500H904M638 448.500H904" stroke="#b02424" strokeDasharray="9 5 3 5" />
      {bars.filter((x) => x >= 355).map((x, i) => {
        const j = jitter(i) * 2.500;
        return <path key={x} d={`M${x + 0.5} ${lerpTable(leftBars, x, 1) + j}V${lerpTable(leftBars, x, 2) + j}`} stroke="#52c052" />;
      })}
      <path d="M796.500 370L801.500 448" stroke="#d01a1a" strokeWidth="2" />
      <rect x="907" y="338" width="39" height="11" fill="#7f8b99" />
      <Tx x={910} y={347.300} w={33} fill="#10151c">1.25382</Tx>
    </svg>
  );
}

function LeftMarks() {
  return (
    <svg className="pointer-events-none absolute inset-0 h-[591px] w-[635px] font-['DejaVu_Sans',sans-serif] tracking-normal" viewBox="322 115 635 591" fill="none">
      <g strokeDasharray="3 3">
        <path d="M425 480L723 372M723 372L763 357M463 483L723 388M513 428L625 495M325 438L350 462" stroke="#b3583c" />
        <path d="M371 492L541 400M451 480L723 381M455 481L723 385M458 480L723 378" stroke="#2468a8" />
      </g>
      {[[355.500, 468], [371.500, 490.500], [451, 477], [458, 475.500], [461.500, 483], [625.500, 498.500], [723.500, 394.500], [763.500, 361.500]].map(([x, y]) => <Mark key={`${x}${y}`} x={x} y={y} up />)}
      {[[425.500, 477], [463.500, 473.500], [541.500, 400.500], [513.500, 426], [723, 383], [722.500, 378], [725.500, 375.500]].map(([x, y]) => <Mark key={`${x}${y}`} x={x} y={y} up={false} />)}
      <Tx x={795} y={363.500} w={22.500} size={12} bold fill="#cf1c22">Sell</Tx>
      <Mark x={797.500} y={357.500} up={false} />
    </svg>
  );
}

const rightVolA = [1118, 1122, 1101, 1112, 1112, 1116, 1095, 1062, 1090, 1072, 1083, 1041, 1047, 1041, 1055, 1035, 1041, 1045, 1023, 1045, 1047, 1050, 1056, 1059, 1080, 1074, 1059, 1062, 1080, 1053, 1056, 1056, 1050, 1030, 1026, 1028, 1044, 996, 1005, 1002, 1030, 1036, 1040, 1030, 1062, 1068, 1050, 1075, 1090, 1068, 1083, 1090, 1083, 1092, 1092, 1092, 1095, 1092, 1095, 1092, 1107, 1100, 1100, 1083, 1100, 1083, 1122, 1152, 1146, 1149, 1143, 1104, 1101, 1098, 1095, 1095, 1110, 1118, 1112, 1071, 1101, 1089, 1100, 1083, 1065, 1035, 1083, 1083, 1090, 1092, 1110, 1107, 1104, 1104, 1131, 1090, 1101, 1080, 1065, 1056, 1065, 1068, 1080, 1047, 1062, 1077, 1065, 1065, 1065, 1047, 1053, 1050, 1053, 1060, 1074, 1062, 1080, 1056, 1059, 1056, 1080, 1090, 1101, 1065, 1086, 1062, 1056, 1053, 1050, 1038, 1041, 1044, 1056, 1008, 1005, 1041];

// High, body top, body bottom, low and fill flag, in thirds of a pixel below y = 300.
const candles = [
  [357, 379, 386, 392, 0], [340, 379, 400, 408, 1], [397, 400, 404, 420, 0], [372, 392, 400, 415, 0], [380, 390, 396, 405, 0], [357, 366, 396, 420, 0], [355, 364, 384, 402, 1], [335, 346, 384, 388, 0], [325, 337, 346, 352, 0], [322, 335, 339, 345, 0], [308, 310, 338, 350, 0], [290, 309, 318, 320, 1], [283, 304, 318, 320, 0], [296, 304, 314, 320, 1], [300, 312, 314, 325, 0], [300, 312, 334, 338, 1], [296, 298, 335, 342, 0], [270, 295, 300, 305, 0], [250, 257, 296, 298, 0], [235, 246, 260, 278, 0], [180, 188, 247, 250, 0], [150, 164, 190, 200, 0], [140, 152, 164, 170, 0], [138, 153, 208, 212, 1], [185, 210, 228, 238, 1], [168, 182, 230, 245, 0], [165, 182, 242, 245, 1], [172, 198, 244, 248, 0], [175, 192, 198, 218, 0], [180, 192, 196, 208, 0], [178, 186, 194, 202, 0], [152, 165, 190, 200, 0], [140, 165, 168, 175, 0], [158, 166, 176, 182, 1], [118, 148, 178, 185, 0], [140, 148, 196, 208, 1], [180, 186, 196, 215, 0], [145, 176, 186, 205, 0], [140, 172, 176, 185, 0], [130, 140, 172, 176, 0], [72, 98, 140, 170, 0], [97, 98, 186, 192, 1], [160, 186, 190, 205, 0], [180, 192, 202, 206, 1], [190, 200, 206, 210, 0], [205, 206, 300, 302, 1], [228, 230, 300, 302, 0], [195, 230, 236, 245, 1], [208, 213, 238, 250, 0], [170, 172, 215, 240, 0], [160, 172, 184, 210, 1], [140, 162, 184, 205, 0], [125, 138, 162, 182, 0], [105, 124, 138, 155, 0], [65, 68, 124, 130, 0], [32, 68, 98, 125, 1], [88, 96, 125, 170, 2], [32, 68, 125, 126, 0],
];

function RightChart() {
  const times = ["8 Sep 2023", "8 Sep 11:00", "8 Sep 15:00", "8 Sep 19:00", "8 Sep 23:00", "11 Sep 03:00", "11 Sep 07:00", "11 Sep 11:00", "11 Sep 15:00"];
  return (
    <svg className="block h-[560px] w-[728px] font-['DejaVu_Sans_Condensed','DejaVu_Sans',sans-serif] tracking-normal" viewBox="1189 146 728 560">
      <rect x="1189" y="146" width="728" height="560" fill="#000" />
      <path d="M1192.500 686V148.500H1864.500V685.500H1192.500" fill="none" stroke="#fff" />
      <path d="M1732 149H1741L1736.500 154Z" fill="#8593a3" />
      <Flags x={1197} y={154} />
      <Tx x={1238.500} y={163.500} w={213.500}>GBPUSDx, M15:  Great Britain Pound vs US Dollar</Tx>
      <Tx x={1772} y={163.500} w={69.500}>Ai GbPUsD MT5</Tx>
      <Axis first={126110} step={155} y0={173.300} dy={32} n={16} x={1865} />
      {rightVolA.map((v, i) => (
        <path key={i} d={`M${1196.500 + i * 4} 685V${685 - (1156 - v) / 3}`} stroke="#5aa65a" />
      ))}
      {times.map((t, i) => (
        <g key={t}>
          <path d={`M${1192.500 + i * 64} 685V689`} stroke="#fff" />
          <Tx x={1192 + i * 64} y={698.500} w={t.length === 10 ? 46.500 : t.length === 11 ? 49.500 : 54}>{t}</Tx>
        </g>
      ))}
      <Tx x={1198} y={251} w={11.500}>TP</Tx>
      <path d="M1193 253.500H1864M1505 430.500H1864" stroke="#a82222" strokeDasharray="9 5 3 7" />
      <path d="M1505 322.500H1864" stroke="#7f8894" />
      <path d="M1505 342.500H1864" stroke="#6dbb6d" strokeDasharray="4 3" />
      <path d="M1193.500 411V422M1505.500 428V442M1428 502.500H1434" stroke="#7be81e" strokeWidth="1.500" />
      {candles.map(([h, t, b, l, f], i) => {
        const x = 1508.500 + i * 4;
        const y = (v: number) => 300 + v / 3;
        return (
          <g key={i} stroke={f === 2 ? "#e8fff0" : "#4fc94f"}>
            <path d={`M${x} ${y(h)}V${y(l)}`} />
            <rect x={x - 1} y={y(t)} width="2" height={Math.max(1, (b - t) / 3)} fill={f === 0 ? "#000" : f === 1 ? "#b6f5b6" : "#fff"} />
          </g>
        );
      })}
      <rect x="1867" y="317" width="39" height="11" fill="#7f8b99" />
      <Tx x={1870} y={326.300} w={33} fill="#10151c">1.25389</Tx>
    </svg>
  );
}

function RightMarks() {
  return (
    <svg className="pointer-events-none absolute inset-0 h-[560px] w-[728px] font-['DejaVu_Sans',sans-serif] tracking-normal" viewBox="1189 146 728 560" fill="none">
      <g strokeDasharray="3 3">
        <path d="M1194 423L1212 428L1244 439M1194 455L1244 461" stroke="#b3583c" />
        <path d="M1194 441L1244 420" stroke="#2468a8" />
      </g>
      <path d="M1744.500 254L1737 312L1735.500 345" stroke="#1414b4" strokeWidth="2.200" />
      <Mark x={1244.500} y={408} up={false} />
      <Mark x={1244.500} y={433} up={false} />
      <Mark x={1244.500} y={428.500} up={false} />
      <Mark x={1244.500} y={443.500} up />
      <Mark x={1244.500} y={465.500} up />
      <Tx x={1736} y={342} w={18.500} size={12} bold fill="#1717b0">buy</Tx>
      <Mark x={1736.500} y={347} up />
    </svg>
  );
}

function Quick({ tone, lots, sup1, sup2, pos }: { tone: "red" | "blue"; lots: string; sup1: string; sup2: string; pos: string }) {
  const top = tone === "red" ? "bg-linear-to-b from-[#f04b48] to-[#e03230]" : "bg-linear-to-b from-[#4d4df0] to-[#2f2fe0]";
  const low = tone === "red" ? "bg-linear-to-b from-[#de2d2b] to-[#b00505]" : "bg-linear-to-b from-[#2e2edf] to-[#0505ab]";
  const rule = tone === "red" ? "border-[#f8a3a0]" : "border-[#9d9df5]";
  const price = (big: string, sup: string, w: string) => (
    <div className={`${w} ${low} flex h-[35px] items-start pl-[13px]`}>
      <Fit w={23} className="mt-[17px] text-[12.5px] font-semibold">1.25</Fit>
      <Fit w={32} className="ml-[4px] text-[30px] leading-[36px]">{big}</Fit>
      <span className="mt-[6px] ml-[3px] text-[12px] font-semibold">{sup}</span>
    </div>
  );
  return (
    <div className={`absolute ${pos} w-[187px] text-[#ffeff4]`}>
      <div className="flex h-[22px]">
        <div className={`${top} flex w-[43px] justify-center pt-[4px] pr-px`}>
          <div className={`flex h-[18px] w-[36px] justify-center border-b ${rule}`}><Fit w={24} className="opacity-85">SELL</Fit></div>
        </div>
        <div className="mt-px ml-[3px] flex h-[19px] w-[95px] items-center border border-[#888] bg-white text-black">
          <div className="flex h-full w-[19px] shrink-0 items-center justify-center border-r border-[#999] bg-[#f1f1f1]"><div className="h-0 w-0 border-x-[3px] border-t-[3px] border-x-transparent border-t-black" /></div>
          <div className="flex flex-1 justify-end pr-[5px]"><Fit w={20}>{lots}</Fit></div>
          <div className="flex h-full w-[20px] shrink-0 items-center justify-center border-l border-[#999] bg-[#f1f1f1] pr-px"><div className="h-0 w-0 border-x-[3px] border-b-[3px] border-x-transparent border-b-black" /></div>
        </div>
        <div className={`${top} ml-auto flex w-[43px] justify-center pt-[4px] pr-[2px]`}>
          <div className={`flex h-[18px] w-[36px] justify-center border-b ${rule}`}><Fit w={22} className="opacity-85">BUY</Fit></div>
        </div>
      </div>
      <div className="flex justify-between">
        {price("38", sup1, "w-[93px]")}
        {price("39", sup2, "w-[92px]")}
      </div>
    </div>
  );
}

type Line = [string, number, string];

function Info({ lines, pos }: { lines: Line[]; pos: string }) {
  return (
    <div className={`absolute ${pos} h-[233px] w-[310px] border-[4px] border-[#f0d62e] bg-[#27294b] shadow-[inset_0_0_0_1.5px_#54491d] font-['DejaVu_Sans_Condensed','DejaVu_Sans',sans-serif] font-bold`}>
      <div className="flex flex-col pl-[4px]">
        {lines.map(([t, w, c]) => (
          <div key={t} className={`flex items-center ${c}`}><Fit w={w}>{t}</Fit></div>
        ))}
      </div>
    </div>
  );
}

const CY = "text-[#62b9ea]";
const infoLines = (spread: string, sw: number, max: string, mw: number, lim: string, lw: number, long: string, short: string, rate: string, rw: number, name: string): Line[] => [
  [`SYMBOL SPREAD: ${spread}  Trg:0.00428`, sw, "mt-[14px] h-[20px] text-[12.5px] text-[#b9b9c4]"],
  [`SYMBOL VOLUME_MAX: ${max} (Lot)`, mw, "h-[20px] text-[12.5px] text-white"],
  [`SYMBOL VOLUME_LIMIT: ${lim} (Lot)`, lw, `h-[17px] text-[11px] ${CY}`],
  [`Long Trade: ${long} (Buy)`, 162, "mt-[5px] h-[20px] text-[16px] text-[#c4c4d2]"],
  [`Short Trade: ${short} (Sell)`, 167, "h-[20px] text-[16px] text-[#d2151c]"],
  ["Signale: 1", 53, `mt-[20px] h-[16px] text-[11px] ${CY}`],
  [rate, rw, "h-[18px] text-[12px] text-[#e6cb40]"],
  ["SYMBOL_TRADE_TICK_VALUE: 1.0", 187, `mt-[14px] h-[16px] text-[11px] ${CY}`],
  ["Orders Total: 0", 83, `h-[14px] text-[11px] ${CY}`],
  [name, 61, "h-[10px] text-[10px] text-white"],
];

function ChartTabs({ tabs }: { tabs: [string, string, number][] }) {
  return (
    <div className="flex h-[21px] shrink-0 border-t-2 border-white">
      {tabs.map(([t, w, fw], i) => (
        <div key={t} className={`${w} flex h-[19px] items-center justify-center ${i === 1 ? "border-x border-b-2 border-black bg-white pt-[3px] text-black" : "border-t border-t-black pt-px text-[#7b7b7b]"}`}>
          <Fit w={fw}>{t}</Fit>
        </div>
      ))}
      <div className="flex flex-1 items-center justify-end gap-[17px] border-t border-t-black pr-[13px]">
        <div className="h-0 w-0 border-y-[4px] border-r-[4px] border-y-transparent border-r-[#9b9b9b]" />
        <div className="h-0 w-0 border-y-[4px] border-l-[4px] border-y-transparent border-l-[#9b9b9b]" />
      </div>
    </div>
  );
}

/* ---------- bottom panels ---------- */

function SideStrip() {
  return (
    <div className="flex w-[15px] shrink-0 flex-col items-center pt-[4px]">
      <Cross />
      <div className="mt-[5px] flex w-[13px] flex-1 items-end justify-center bg-linear-to-b from-[#d8e5f3] to-[#bac7d5] pb-px">
        <div className="rotate-180 text-[12px] leading-[13px] [writing-mode:vertical-rl]">Toolbox</div>
      </div>
    </div>
  );
}

function Tester({ edge }: { edge: string }) {
  return (
    <>
      <div className="flex w-[15px] shrink-0 flex-col items-center gap-[4px] pt-[3px]">
        <Cross />
        <div className="flex flex-col gap-px">{[0, 1, 2, 3].map((i) => <div key={i} className="h-px w-[5px] bg-[#9a9a9a]" />)}</div>
      </div>
      <div className={`flex h-[23px] flex-1 items-center border-t border-l bg-white pl-[8px] ${edge}`}>
        <div className="mr-[10px] h-[3px] w-[3px] rounded-full bg-black" />
        <Fit w={77}>Strategy Tester</Fit>
      </div>
    </>
  );
}

type BTab = { t: string; w: string; fw: number; n?: string };
const bottomTabs = (news: string, newsW: string): BTab[] => [
  { t: "Exposure", w: "w-[67px]", fw: 47.5 }, { t: "History", w: "w-[58px]", fw: 38 }, { t: "News", w: newsW, fw: 29, n: news }, { t: "Mailbox", w: "w-[69px]", fw: 42, n: "8" },
  { t: "Calendar", w: "w-[67px]", fw: 47 }, { t: "Alerts", w: "w-[50px]", fw: 30.5 }, { t: "Articles", w: "w-[59px]", fw: 39 }, { t: "Code Base", w: "w-[75px]", fw: 55 }, { t: "Experts", w: "w-[57px]", fw: 37.5 }, { t: "Journal", w: "w-[60px]", fw: 38.5 },
];

function ToolboxTabs({ tabs, signalsOff }: { tabs: BTab[]; signalsOff: boolean }) {
  return (
    <div className="flex h-[23px] shrink-0 items-start">
      <div className="h-px w-[3px] bg-black" />
      <div className="flex h-[20px] w-[50px] items-center justify-center border-r-2 border-b-2 border-l border-black bg-white pt-[3px]"><Fit w={29}>Trade</Fit></div>
      <div className="flex h-[23px] flex-1 items-start border-t border-black text-[#7b7b7b]">
        {tabs.map((b, i) => (
          <div key={b.t} className={`${b.w} flex h-[20px] items-center pl-[9.5px]`}>
            <Fit w={b.fw}>{b.t}</Fit>
            {b.n && <span className="mt-[8px] ml-[2px] text-[10px] font-bold tracking-[-0.5px] text-[#c2313a]">{b.n}</span>}
            {i < tabs.length - 1 && <div className="ml-auto h-[14px] w-px bg-[#6e6e6e]" />}
          </div>
        ))}
        <div className="ml-auto flex h-[23px] items-center pr-[10px] text-black">
          <Bag size="h-[14px] w-[13px]" />
          <Fit w={37} className="ml-[5px]">Market</Fit>
          <div className="ml-[12px] flex"><Signal off={signalsOff} size="h-[12px] w-[16px]" /></div>
          <Fit w={37} className={signalsOff ? "ml-[4px] text-[#a8a8a8]" : "ml-[4px]"}>Signals</Fit>
          <div className="ml-[12px] flex"><Cloud size="h-[14px] w-[16px]" /></div>
          <Fit w={20} className="ml-[4px]">VPS</Fit>
        </div>
      </div>
    </div>
  );
}

function Doc({ color }: { color: string }) {
  return (
    <svg className="mr-[5px] h-[15px] w-[12px]" viewBox="0 0 12 15" fill="#fff" stroke={color}>
      <rect x=".8" y=".8" width="10" height="13.400" rx="1.500" strokeWidth="1.200" />
      <path d="M4 4.500H7.500M4 7.500H7.500" stroke="#555" />
    </svg>
  );
}

const lc = ["w-[112px]", "w-[78px]", "w-[130px]", "w-[86px]", "w-[86px]", "w-[86px]", "w-[86px]", "w-[86px]", "w-[86px]", "w-[102px]"];
const rc = ["w-[103px]", "w-[71px]", "w-[119px]", "w-[79px]", "w-[79px]", "w-[79px]", "w-[79px]", "w-[79px]", "w-[79px]", "w-[79px]", "w-[92px]"];

function THead({ cols, labels, sorted }: { cols: string[]; labels: string[]; sorted: number }) {
  return (
    <div className="flex h-[24px] shrink-0">
      {labels.map((l, i) => (
        <div key={i} className={`${cols[i]} flex shrink-0 items-center border-r border-[#dedede] ${i < 2 ? "pl-[6px]" : "justify-end pr-[5px]"}`}>
          <span>{l}</span>
          {sorted === i && <div className="mr-[6px] ml-[18px]"><Up /></div>}
        </div>
      ))}
    </div>
  );
}

function TRow({ cols, cells, doc, closers, profit, bg }: { cols: string[]; cells: string[]; doc: string; closers: number[]; profit: string; bg: string }) {
  return (
    <div className={`flex h-[20px] shrink-0 border-b border-[#c4c4c4] ${bg}`}>
      {cells.map((c, i) => {
        const last = i === cells.length - 1;
        return (
          <div key={i} className={`${cols[i]} flex shrink-0 items-center border-[#c4c4c4] ${last ? "" : "border-r"} ${i === 0 ? "pl-[4px]" : i === 1 ? "pl-[3px]" : "justify-end pr-[2px]"}`}>
            {i === 0 && <Doc color={doc} />}
            <span className={`${i === 0 || c === "sell" || c === "buy" ? "" : NUM} ${last ? profit : ""}`}>{c}</span>
            {closers.includes(i) && <div className={last ? "mr-[4px] ml-[8px]" : "mr-[3px] ml-[8px]"}><Cross size="h-[8px] w-[8px]" color="#9a9a9a" width={2} /></div>}
          </div>
        );
      })}
    </div>
  );
}

function StatusBar({ profile, fields, ping }: { profile: string; fields: string[]; ping: string }) {
  const ws = ["w-[98px]", "w-[71px]", "w-[71px]", "w-[68px]", "w-[70px]", "w-[66px]"];
  return (
    <div className="flex h-[24px] shrink-0 items-center pt-[2px]">
      <div className="w-[265px] pl-[2px]"><Fit w={92.500}>For Help, press F1</Fit></div>
      <div className="flex h-[18px] w-[128px] items-center border-l border-[#9a9a9a] pl-[5px]">{profile}</div>
      {ws.map((w, i) => (
        <div key={w + i} className={`${w} flex h-[18px] items-center border-l border-[#9a9a9a] pl-[5px] whitespace-nowrap`}>
          {fields[i] && <span className="tracking-[-0.72px]">{fields[i]}</span>}
        </div>
      ))}
      <div className="flex h-[18px] flex-1 items-center border-l border-[#9a9a9a] pl-[5px]">
        <svg className="mr-[5px] h-[12px] w-[15px]" viewBox="0 0 15 12" stroke={G} strokeWidth="2"><path d="M1 12V9M4 12V8M7 12V6M10 12V3.500M13 12V1" /></svg>
        <Fit w={46}>{ping}</Fit>
        <svg className="mr-[2px] ml-auto h-[9px] w-[9px] self-end" viewBox="0 0 9 9" fill="#b5b5b5"><path d="M6 0h2v2h-2zM6 3h2v2h-2zM3 3h2v2h-2zM6 6h2v2h-2zM3 6h2v2h-2zM0 6h2v2h-2z" /></svg>
      </div>
    </div>
  );
}

/* ---------- windows ---------- */

const FRAME = "border-t border-l border-[#8e8e8e] bg-white";

function LeftWindow() {
  const cols = ["w-[132px]", "w-[66px]", "w-[66px]", "w-[48px]"];
  const avg = <Wave />;
  return (
    <div className="flex h-[1040px] w-[960px] shrink-0 flex-col border-t border-r border-l border-[#6d6a6c] bg-[#f0f0f0]">
      <TitleBar
        active
        logo={<div className="flex h-[15px] w-[14px] items-center justify-center overflow-hidden rounded-l-[2px] bg-[#14110f] text-[8px] font-bold tracking-[-0.6px] text-white italic">XM</div>}
        title={
          <div className="ml-[71px] overflow-hidden py-px">
            <Fit w={340} className="-ml-[4px]">XMGlobal-MT5 4 - Hedge - XM Global Limited - [GBPUSD#,M15]</Fit>
          </div>
        }
      />
      <MenuBar />
      <div className="h-px shrink-0 bg-[#9a9a9a]" />
      <MainToolbar signalsOff={false} shiftOn={false} />
      <div className="flex h-[30px] shrink-0 items-center border-t border-white">
        <div className="flex h-[29px] w-[800px] items-center border-r border-[#9a9a9a]">
          <ToolRow tools={["vline", "arrow", "hline", "abc", "waves", "gann", "trend", "channel", "fibo", "text", "angle"]} />
          <Sep />
          <Grip w="w-[8px]" />
          <Frames items={["M1", "M2", "M5", "M15", "M30", "H1", "H4", "D1", "W1", "MN"]} />
        </div>
      </div>
      <div className="h-px shrink-0 bg-[#9a9a9a]" />

      <div className="flex h-[613px] shrink-0">
        <div className="flex w-[321px] shrink-0 flex-col border-r border-[#8e8e8e] pl-[3px]">
          <DockHead title="Market Watch: 17:10:36" w={119} bar="w-[300px]" />
          <div className={`mr-[3px] flex h-[302px] shrink-0 flex-col ${FRAME}`}>
            <div className="flex h-[24px] shrink-0">
              <div className="flex w-[132px] items-center border-r border-[#e2e2e2] pl-[6px]"><Fit w={40}>Symbol</Fit></div>
              <div className="flex w-[66px] items-center justify-end border-r border-[#e2e2e2] pr-[5px]">Bid</div>
              <div className="flex w-[66px] items-center justify-end border-r border-[#e2e2e2] pr-[5px]">Ask</div>
              <div className="flex flex-1 items-center justify-between border-r border-[#e2e2e2] pr-[11px] pl-[6px]"><span>..</span><Up /></div>
            </div>
            {leftQuotes.map((q) => <QuoteRow key={q.s} q={q} cols={cols} />)}
            <div className="flex h-[20px] items-center pr-[4px] pl-[4px] text-[#7b7b7b]">
              <svg className="mr-[7px] h-[10px] w-[10px]" viewBox="0 0 10 10" stroke={G} strokeWidth="1.300"><path d="M5 0V10M0 5H10" /></svg>
              <Fit w={69}>click to add...</Fit>
              <Fit w={40} className="ml-auto">7 / 1522</Fit>
            </div>
          </div>
          <div className="mr-[3px]">
            <DockTabs tabs={[["Symbols", "w-[65px]", 45], ["Details", "w-[55px]", 35], ["Trading", "w-[61px]", 39.5], ["Ticks", "w-[48px]", 27]]} />
          </div>
          <div className="-ml-[3px] h-px shrink-0 bg-[#9a9a9a]" />
          <DockHead title="Navigator" w={47} bar="w-[300px]" />
          <div className="mr-[3px] flex h-[228px] shrink-0 border-l border-[#8e8e8e] bg-white">
            <div className="flex w-[296px] flex-col overflow-hidden pt-px">
              <Node g="| -" />
              <div className="-mt-[5px] flex h-0 items-start pl-[70px]"><div className="h-px w-[11px] shrink-0 bg-[#c59b1c]" /></div>
              <div className="h-[5px] shrink-0" />
              <Node g="|  t" />
              <Node g="|  l" icon={<Cap />} text="Ai GbPUsD MT5 - GBPUSD#,M15" w={172} />
              <Node g="-" icon={avg} text="Indicators" w={52} />
              <Node g="|-" icon={<Folder />} text="Trend" w={30.500} />
              <Node g="||t" icon={avg} text="Adaptive Moving Average" w={137} />
              <Node g="||t" icon={avg} text="Average Directional Movement Index" w={195} />
              <Node g="||t" icon={avg} text="Average Directional Movement Index Wilder" w={233} />
              <Node g="||t" icon={avg} text="Bollinger Bands" w={82} />
              <Node g="||t" icon={avg} text="Double Exponential Moving Average" w={192} />
              <Node g="||t" icon={avg} text="Envelopes" w={53} />
              <Node g="||t" icon={avg} text="Fractal Adaptive Moving Average" w={178} />
            </div>
            <div className="flex flex-1 flex-col items-center bg-[#f0f0f0]">
              <div className="h-[20px] w-full bg-white" />
              <div className="mt-[2px] h-[17px] w-[13px] bg-[#cdcdcd]" />
              <svg className="mt-auto mb-[5px] h-[6px] w-[8px]" viewBox="0 0 8 6" fill="none" stroke="#505050" strokeWidth="1.800"><path d="M.8 1L4 4.500L7.200 1" /></svg>
            </div>
          </div>
          <div className="mr-[3px]">
            <DockTabs tabs={[["Common", "w-[71px]", 50.500], ["Favorites", "w-[68px]", 47]]} />
          </div>
        </div>
        <div className="flex flex-1 flex-col">
          <div className="h-px shrink-0 bg-[#5c5c5c]" />
          <div className="relative h-[591px] w-[635px] shrink-0">
            <LeftChart />
            <div className="absolute top-[7px] left-[563px]"><Cap light /></div>
            <Quick tone="red" lots="0.01" sup1="2" sup2="2" pos="top-[24px] left-[7px]" />
            <Info pos="top-[124px] left-[6px]" lines={infoLines("0.0001", 246, "50.0", 219, "0.0", 187, "0", "1", "Success Rate: 0.51     tp: 194  sl: 186", 227, "Ai GBPUSD#")} />
            <LeftMarks />
          </div>
          <ChartTabs tabs={[["EURUSD#,M15", "w-[104px]", 76], ["GBPUSD#,M15", "w-[100px]", 77], ["USDJPY#,H1", "w-[88px]", 65]]} />
        </div>
      </div>
      <div className="h-px shrink-0 bg-[#9a9a9a]" />

      <div className="flex h-[29px] shrink-0 pt-[4px] pr-[3px] pb-px"><Tester edge="border-[#8e8e8e]" /></div>
      <div className="h-px shrink-0 bg-[#9a9a9a]" />
      <div className="flex h-[257px] shrink-0 pt-[4px] pr-[3px] pb-[2px]">
        <SideStrip />
        <div className="flex flex-1 flex-col">
          <div className={`flex flex-1 flex-col ${FRAME}`}>
            <THead cols={lc} labels={["Symbol", "Ticket", "Time", "Type", "Volume", "Price", "S / L", "T / P", "Price", "Profit"]} sorted={3} />
            <TRow cols={lc} doc="#a83a32" closers={[6, 7, 9]} profit={RED} bg="bg-white" cells={["eurusd#", "219139029", "2023.09.05 22:30:00", "sell", "0.01", "1.07242", "1.07672", "1.06812", "1.07494", "-2.52"]} />
            <TRow cols={lc} doc="#a83a32" closers={[6, 7, 9]} profit={RED} bg="bg-[#ebebeb]" cells={["gbpusd#", "220074190", "2023.09.11 17:00:00", "sell", "0.01", "1.25288", "1.25716", "1.24860", "1.25392", "-1.04"]} />
            <div className="-ml-[4px] flex h-[20px] shrink-0">
              <div className="w-[692px] shrink-0 bg-white" />
              <div className="flex flex-1 items-center justify-end bg-[#c8c8c8] pr-[22px] font-bold"><Fit w={28}>-3.56</Fit></div>
            </div>
          </div>
          <ToolboxTabs tabs={bottomTabs("99", "w-[61px]")} signalsOff={false} />
        </div>
      </div>
      <div className="h-px shrink-0 bg-[#9a9a9a]" />
      <StatusBar profile="Market Overview" fields={[]} ping="80.16 ms" />
    </div>
  );
}

function RightWindow() {
  const cols = ["w-[85px]", "w-[42px]", "w-[42px]", "w-[33px]"];
  const rows = [["Date", "2023.09.11"], ["Time", "07:00"], ["Open", "1.25011"], ["High", "1.25057"], ["Low", "1.25004"], ["Close", "1.25021"], ["Volume", "0"], ["Tick Volume", "650"]];
  return (
    <div className="flex h-[1040px] w-[960px] shrink-0 flex-col border-t border-r border-l border-[#8f8f8f] bg-[#f0f0f0]">
      <TitleBar
        active={false}
        logo={
          <svg className="h-[16px] w-[16px]" viewBox="0 0 16 16"><circle cx="8" cy="8" r="6.800" fill="#d6e7a8" stroke="#a3c857" strokeWidth="2" /><circle cx="8" cy="8" r="5.200" fill="#8dbb35" /><path d="M8 4.500a2.300 2.300 0 0 1 1.200 4.200V11.500H6.800V8.700A2.300 2.300 0 0 1 8 4.500Z" fill="#fff" /></svg>
        }
        title={
          <div className="ml-[62px] overflow-hidden py-px">
            <Fit w={513} className="-ml-[2px]">ThinkMarkets-Demo: Demo Account - Hedge - TF Global Markets (Aust) Pty Ltd - [GBPUSDx,M15]</Fit>
          </div>
        }
      />
      <MenuBar />
      <div className="h-px shrink-0 bg-[#9a9a9a]" />
      <MainToolbar signalsOff shiftOn />
      <div className="flex h-[31px] shrink-0 border-t border-white">
        <div className="flex h-[30px] w-[343px] items-center border-r border-b border-[#9a9a9a]">
          <ToolRow tools={["vline", "hline", "trend", "channel", "fibo", "text", "fork"]} />
        </div>
      </div>
      <div className="flex h-[30px] shrink-0 border-t border-white">
        <div className="flex h-[29px] w-[296px] items-center border-r border-[#9a9a9a]">
          <Grip w="w-[7px]" />
          <Frames items={["M1", "M5", "M15", "M30", "H1", "H4", "D1", "W1", "MN"]} />
        </div>
      </div>
      <div className="h-px shrink-0 bg-[#9a9a9a]" />

      <div className="flex h-[582px] shrink-0">
        <div className="flex w-[228px] shrink-0 flex-col border-r border-[#8e8e8e] pl-[3px]">
          <DockHead title="Data Window" w={64} bar="w-[207px]" />
          <div className={`mr-[3px] flex h-[167px] shrink-0 overflow-hidden ${FRAME}`}>
            <div className="flex w-[203px] shrink-0 flex-col">
              <div className="flex h-[20px] shrink-0 border-b border-[#bdbdbd]">
                <div className="flex w-[108px] items-center border-r border-[#c9c9c9] pl-[2px]">
                  <svg className="mr-[4px] h-[15px] w-[15px]" viewBox="0 0 15 15" fill="none"><path d="M.5 0V14.500H15" stroke="#8a8a8a" /><path d="M2 8.500L6 6L9 8.500L14 5.500" stroke={B} /></svg>
                  <Fit w={75}>GBPUSDx,M15</Fit>
                </div>
              </div>
              {rows.map(([a, b], i) => (
                <div key={a} className={`flex h-[20px] shrink-0 border-b border-[#bdbdbd] ${i % 2 ? "bg-white" : "bg-[#ebebeb]"}`}>
                  <div className="flex w-[108px] items-center border-r border-[#c9c9c9] pl-[21px]">{a}</div>
                  <div className={`flex flex-1 items-center justify-end pr-[4px] ${NUM}`}>{b}</div>
                </div>
              ))}
            </div>
            <Scroll h="h-[166px]" top="h-[5px]" thumb="h-[106px]" />
          </div>
          <div className="mt-[3px] -ml-[3px] mb-px h-px shrink-0 bg-[#9a9a9a]" />
          <DockHead title="Navigator" w={47} bar="w-[207px]" />
          <div className={`mr-[3px] flex h-[166px] shrink-0 overflow-hidden ${FRAME}`}>
            <div className="flex w-[203px] shrink-0 flex-col overflow-hidden">
              <Node g="|  |" />
              <Node g="|  l" icon={<Cap />} text="Ai GbPUsD MT5 - GBPUSDx,M15" w={172} />
              <Node g="-" icon={<Wave />} text="Indicators" w={52} />
              <Node g="|+" icon={<Folder />} text="Trend" w={30.500} />
              <Node g="|+" icon={<Folder />} text="Oscillators" w={55} />
              <Node g="|+" icon={<Folder />} text="Volumes" w={46} />
              <Node g="|+" icon={<Folder />} text="Bill Williams" w={64} />
              <Node g="|-" icon={<Folder />} text="Examples" w={49} />
              <Node g="|||" icon={<Folder />} />
            </div>
            <Scroll h="h-[165px]" top="h-[11px]" thumb="h-[17px]" />
          </div>
          <div className="mr-[3px]"><DockTabs tabs={[["Common", "w-[71px]", 50.500], ["Favorites", "w-[68px]", 47]]} /></div>
          <div className="-ml-[3px] h-px shrink-0 bg-[#9a9a9a]" />
          <DockHead title="Market Watch: 17:10:36" w={119} bar="w-[207px]" />
          <div className={`mr-[3px] flex h-[145px] shrink-0 overflow-hidden ${FRAME}`}>
            <div className="flex w-[203px] shrink-0 flex-col">
              <div className="flex h-[24px] shrink-0">
                <div className="flex w-[85px] items-center border-r border-[#e2e2e2] pl-[6px]"><Fit w={40}>Symbol</Fit></div>
                <div className="flex w-[42px] items-center justify-end border-r border-[#e2e2e2] pr-[5px]">Bid</div>
                <div className="flex w-[42px] items-center justify-end border-r border-[#e2e2e2] pr-[5px]">Ask</div>
                <div className="flex flex-1 items-center justify-end border-r border-[#e2e2e2] pr-[5px]">S...</div>
              </div>
              {rightQuotes.map((q) => <QuoteRow key={q.s} q={q} cols={cols} />)}
            </div>
            <Scroll h="h-[144px]" top="h-[62px]" thumb="h-[29px]" />
          </div>
          <div className="mr-[3px]">
            <DockTabs tabs={[["Symbols", "w-[65px]", 45], ["Details", "w-[55px]", 35], ["Trading", "w-[61px]", 39.500], ["Ticks", "w-[48px]", 27]]} />
          </div>
        </div>
        <div className="flex flex-1 flex-col">
          <div className="h-px shrink-0 bg-[#5c5c5c]" />
          <div className="relative h-[560px] w-[728px] shrink-0">
            <RightChart />
            <div className="absolute top-[7px] left-[656px]"><Cap light /></div>
            <Quick tone="blue" lots="0.05" sup1="9" sup2="0" pos="top-[24px] left-[8px]" />
            <Info pos="top-[124px] left-[6px]" lines={infoLines("0.00001", 254, "100.0", 227, "200.0", 201, "1", "0", "Success Rate: 0.50     tp: 18  sl: 18", 211, "Ai GBPUSDx")} />
            <RightMarks />
          </div>
          <ChartTabs tabs={[["EURUSDx,M15", "w-[100px]", 74], ["GBPUSDx,M15", "w-[96px]", 75], ["USDJPYx,H1", "w-[86px]", 62]]} />
        </div>
      </div>
      <div className="h-px shrink-0 bg-[#9a9a9a]" />

      <div className="flex h-[257px] shrink-0 pt-[4px] pr-[3px] pb-[2px]">
        <SideStrip />
        <div className="flex flex-1 flex-col">
          <div className={`flex flex-1 flex-col ${FRAME}`}>
            <THead cols={rc} labels={["Symbol", "Ticket", "Time", "Type", "Volu...", "Price", "S / L", "T / P", "Price", "Swap", "Profit"]} sorted={4} />
            <TRow cols={rc} doc="#1f7d6c" closers={[6, 7, 10]} profit={BLUE} bg="bg-white" cells={["gbpusdx", "30749068", "2023.09.11 17:00:00", "buy", "0.05", "1.25289", "1.24864", "1.25720", "1.25389", "", "5.00"]} />
            <div className="flex h-[20px] shrink-0 bg-[#c8c8c8]">
              <div className="w-[6px] shrink-0 overflow-hidden pt-[4px] pl-[3px]">(</div>
              <div className="mt-[2px] w-[641px] shrink-0 bg-white" />
              <div className="flex flex-1 items-center justify-end pr-[2px] font-bold">
                <Fit w={24}>5.00</Fit>
                <svg className="ml-[4px] h-[16px] w-[16px]" viewBox="0 0 16 16"><circle cx="8" cy="8" r="7.700" fill="#f4f7f2" /><path d="M8 3V13M3 8H13" stroke="#48b02c" strokeWidth="2" /></svg>
              </div>
            </div>
          </div>
          <ToolboxTabs tabs={bottomTabs("7", "w-[56px]")} signalsOff />
        </div>
      </div>
      <div className="h-px shrink-0 bg-[#9a9a9a]" />
      <div className="flex h-[29px] shrink-0 pt-[4px] pr-[3px] pb-[2px]"><Tester edge="border-[#8e8e8e] border-t-2 border-t-black" /></div>
      <div className="h-px shrink-0 bg-[#9a9a9a]" />
      <StatusBar profile="Default" fields={["2023.09.11 07:00", "O: 1.25011", "H: 1.25057", "L: 1.25004", "C: 1.25021", "V: 650"]} ping="74.28 ms" />
    </div>
  );
}

export default function App() {
  return (
    <div className="flex h-[1080px] w-[1920px] flex-col overflow-hidden bg-[#03050a] font-['Open_Sans',sans-serif] text-[12px] leading-none tracking-[-0.35px] text-black">
      <div className="flex h-[1040px] shrink-0">
        <LeftWindow />
        <RightWindow />
      </div>
      <div className="flex h-[40px] shrink-0">
        <div className="relative -mt-[3px] h-[43px] w-[477px] shrink-0 bg-white" />
        <div className="flex flex-1 items-center justify-end pr-[19px] text-white">
          <svg className="h-[8px] w-[13px]" viewBox="0 0 13 8" fill="none" stroke="#fff" strokeWidth="1.400"><path d="M1 7L6.500 1.500L12 7" /></svg>
          <svg className="ml-[9px] h-[18px] w-[18px]" viewBox="0 0 18 18" fill="none" stroke="#fff" strokeWidth="1.300">
            <path d="M1 4.500L15.500 1.500V16H1Z" />
            <path d="M5 9.500Q5 6.500 8 6.500L11 6M9.500 4.500L11.500 6L10 8M11 9.500Q11 12 8 12H5.500M7 10.500L5 12L7 14" />
            <circle cx="12.500" cy="13" r="4.500" fill="#c9252b" stroke="none" />
            <path d="M12.500 10.200V13.500M12.500 14.500V15.700" />
          </svg>
          <svg className="ml-[7px] h-[14px] w-[18px]" viewBox="0 0 18 14" fill="none" stroke="#fff" strokeWidth="1.200">
            <path d="M1 5H3.500L7 1.500V12.500L3.500 9H1ZM9.500 4.500Q11 7 9.500 9.500M12 3Q14.500 7 12 11M14.500 1Q18.500 7 14.500 13" />
          </svg>
          <div className="ml-[8px] flex w-[54px] flex-col items-center gap-[6px]">
            <Fit w={42}>4:10 PM</Fit>
            <Fit w={52}>9/11/2023</Fit>
          </div>
          <svg className="ml-[16px] h-[17px] w-[18px]" viewBox="0 0 18 17" fill="none" stroke="#fff" strokeWidth="1.300"><path d="M1.500 1H16.500V13H11.500L9 15.500L6.500 13H1.500Z" /></svg>
        </div>
        <div className="h-full w-[5px] border-l border-[#4a4a4a]" />
      </div>
    </div>
  );
}
